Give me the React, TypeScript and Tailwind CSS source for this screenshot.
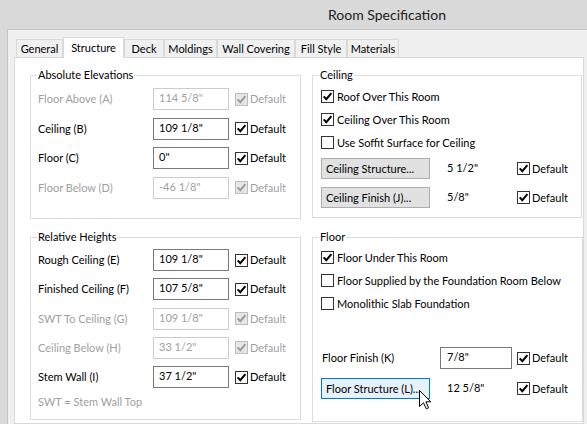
import React from "react";

function Box({ checked = true, disabled = false }: { checked?: boolean; disabled?: boolean }) {
  return (
    <span
      className={
        disabled
          ? "flex h-[13px] w-[13px] shrink-0 items-center justify-center border border-[#bcbcbc] bg-[#e6e6e6]"
          : "flex h-[13px] w-[13px] shrink-0 items-center justify-center border border-[#333333] bg-white"
      }
    >
      {checked && (
        <svg width="11" height="11" viewBox="0 0 11 11">
          <path
            d="M1.7 5.3 L4.3 8.2 L9.4 2.1"
            fill="none"
            stroke={disabled ? "#9a9a9a" : "#000000"}
            strokeWidth="2"
          />
        </svg>
      )}
    </span>
  );
}

function Def({ disabled = false }: { disabled?: boolean }) {
  return (
    <div className="flex items-center gap-[2px]">
      <Box disabled={disabled} />
      <span className={disabled ? "text-[#a0a0a0]" : "text-black"}>Default</span>
    </div>
  );
}

function Field({ label, value, disabled = false }: { label: string; value: string; disabled?: boolean }) {
  return (
    <div className="flex h-[22px] items-center">
      <span className={disabled ? "w-[115px] shrink-0 text-[#a0a0a0]" : "w-[115px] shrink-0 text-black"}>{label}</span>
      <div
        className={
          disabled
            ? "flex h-[22px] w-[76px] shrink-0 items-center border border-[#cccccc] bg-white pb-[2px] pl-[5px] text-[#a0a0a0]"
            : "flex h-[22px] w-[76px] shrink-0 items-center border border-[#7a7a7a] bg-white pb-[2px] pl-[5px] text-black"
        }
      >
        {value}
      </div>
      <div className="ml-[6px]">
        <Def disabled={disabled} />
      </div>
    </div>
  );
}

function CheckRow({ label, checked }: { label: string; checked: boolean }) {
  return (
    <div className="flex h-[13px] items-center gap-[3px]">
      <Box checked={checked} />
      <span className="whitespace-nowrap leading-[13px]">{label}</span>
    </div>
  );
}

function Btn({ children, hot = false }: { children: React.ReactNode; hot?: boolean }) {
  return (
    <div
      className={
        hot
          ? "flex h-[21px] w-[109px] shrink-0 items-center overflow-hidden whitespace-nowrap border border-[#0078d7] bg-[#e5f1fb] pl-[4px]"
          : "flex h-[21px] w-[109px] shrink-0 items-center overflow-hidden whitespace-nowrap border border-[#adadad] bg-[#e1e1e1] pl-[4px]"
      }
    >
      {children}
    </div>
  );
}

function BtnRow({ label, value, hot = false }: { label: string; value: string; hot?: boolean }) {
  return (
    <div className="flex items-center">
      <Btn hot={hot}>{label}</Btn>
      <span className="ml-[17px] w-[70px] shrink-0 pb-[2px]">{value}</span>
      <Def />
    </div>
  );
}

function Tab({ label, w, selected = false }: { label: string; w: string; selected?: boolean }) {
  return (
    <div
      className={
        selected
          ? `relative z-10 -mb-[1px] flex h-[21px] items-center justify-center border border-b-0 border-[#d9d9d9] bg-white pb-[1px] ${w}`
          : `flex h-[18px] items-center justify-center border border-b-0 border-[#d9d9d9] bg-[#f0f0f0] pt-[1px] ${w}`
      }
    >
      {label}
    </div>
  );
}

export default function App() {
  return (
    <div className="relative flex h-[424px] w-[587px] flex-col overflow-hidden bg-[#d9d9d9] font-['Lato','Noto_Sans',sans-serif] text-[11px] leading-[16px] text-black">
      <div className="flex h-[29px] shrink-0 items-center pl-[328px] text-[14px] text-[#202020]">Room Specification</div>
      <div className="ml-[7px] flex flex-1 flex-col border-l border-t border-[#c4c4c4] bg-[#f0f0f0] pt-[7px]">
        <div className="flex h-[20px] items-end pl-[8px]">
          <Tab label="General" w="w-[47px]" />
          <Tab label="Structure" w="w-[61px]" selected />
          <Tab label="Deck" w="w-[40px]" />
          <Tab label="Moldings" w="w-[53px]" />
          <Tab label="Wall Covering" w="w-[78px]" />
          <Tab label="Fill Style" w="w-[52px]" />
          <Tab label="Materials" w="w-[52px]" />
        </div>
        <div className="ml-[6px] flex w-[570px] flex-1 gap-[11px] border border-[#d9d9d9] bg-white pl-[15px] pt-[9px]">
          <div className="flex w-[271px] flex-col gap-[10px]">
            <fieldset className="h-[152px] border border-[#dcdcdc]">
              <legend className="ml-[6px] px-[1px] leading-[16px]">Absolute Elevations</legend>
              <div className="flex flex-col gap-[7.5px] pl-[7px] pt-[5px]">
                <Field label="Floor Above (A)" value='114 5/8"' disabled />
                <Field label="Ceiling (B)" value='109 1/8"' />
                <Field label="Floor (C)" value='0"' />
                <Field label="Floor Below (D)" value='-46 1/8"' disabled />
              </div>
            </fieldset>
            <fieldset className="h-[191px] border border-[#dcdcdc]">
              <legend className="ml-[6px] px-[1px] leading-[16px]">Relative Heights</legend>
              <div className="flex flex-col gap-[7.25px] pl-[7px] pt-[4px]">
                <Field label="Rough Ceiling (E)" value='109 1/8"' />
                <Field label="Finished Ceiling (F)" value='107 5/8"' />
                <Field label="SWT To Ceiling (G)" value='109 1/8"' disabled />
                <Field label="Ceiling Below (H)" value='33 1/2"' disabled />
                <Field label="Stem Wall (I)" value='37 1/2"' />
              </div>
              <div className="mt-[6px] pl-[7px] text-[#a0a0a0]">SWT = Stem Wall Top</div>
            </fieldset>
          </div>
          <div className="flex w-[270px] flex-col gap-[11px]">
            <fieldset className="h-[151px] border border-[#dcdcdc]">
              <legend className="ml-[6px] px-[1px] leading-[16px]">Ceiling</legend>
              <div className="flex flex-col gap-[10px] pl-[8px] pt-[7px]">
                <CheckRow label="Roof Over This Room" checked />
                <CheckRow label="Ceiling Over This Room" checked />
                <CheckRow label="Use Soffit Surface for Ceiling" checked={false} />
              </div>
              <div className="mt-[9px] flex flex-col gap-[8px] pl-[8px]">
                <BtnRow label="Ceiling Structure..." value='5 1/2"' />
                <BtnRow label="Ceiling Finish (J)..." value='5/8"' />
              </div>
            </fieldset>
            <fieldset className="h-[193px] w-[271px] border border-[#dcdcdc]">
              <legend className="ml-[6px] px-[1px] leading-[16px]">Floor</legend>
              <div className="flex flex-col gap-[10px] pl-[8px] pt-[6px]">
                <CheckRow label="Floor Under This Room" checked />
                <CheckRow label="Floor Supplied by the Foundation Room Below" checked={false} />
                <CheckRow label="Monolithic Slab Foundation" checked={false} />
              </div>
              <div className="mt-[37px] flex h-[22px] items-center pl-[8px]">
                <span className="w-[119px] shrink-0 pl-[1px]">Floor Finish (K)</span>
                <div className="flex h-[22px] w-[72px] shrink-0 items-center border border-[#7a7a7a] bg-white pb-[2px] pl-[6px]">7/8"</div>
                <div className="ml-[5px]">
                  <Def />
                </div>
              </div>
              <div className="mt-[9px] pl-[8px]">
                <BtnRow label="Floor Structure (L)..." value='12 5/8"' hot />
              </div>
            </fieldset>
          </div>
        </div>
      </div>
      <svg className="absolute left-[419px] top-[390px]" width="13" height="20" viewBox="0 0 13 20">
        <path
          d="M0.5 0.5 L0.5 16.5 L4.5 12.8 L7.3 18.8 L9.6 17.8 L6.9 11.8 L11.8 11.8 Z"
          fill="#ffffff"
          stroke="#000000"
          strokeWidth="1"
          strokeLinejoin="miter"
        />
      </svg>
    </div>
  );
}
